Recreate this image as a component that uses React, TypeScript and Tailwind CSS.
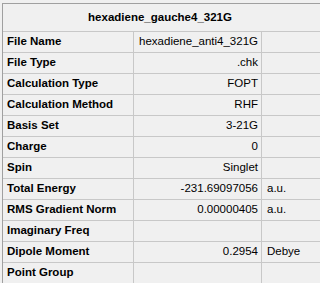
const rows: [string, string, string][] = [
  ["File Name", "hexadiene_anti4_321G", ""],
  ["File Type", ".chk", ""],
  ["Calculation Type", "FOPT", ""],
  ["Calculation Method", "RHF", ""],
  ["Basis Set", "3-21G", ""],
  ["Charge", "0", ""],
  ["Spin", "Singlet", ""],
  ["Total Energy", "-231.69097056", "a.u."],
  ["RMS Gradient Norm", "0.00000405", "a.u."],
  ["Imaginary Freq", "", ""],
  ["Dipole Moment", "0.2954", "Debye"],
  ["Point Group", "", ""],
];

export default function App() {
  return (
    <div
      className="h-[283px] w-[320px] overflow-hidden bg-[#f0f0f0] pl-[2px] pt-[3px] text-[11.5px] text-black"
      style={{ fontFamily: '"Liberation Sans", Arial, sans-serif' }}
    >
      <div className="w-[330px] border-l border-t border-[#a0a0a0]">
        <div className="flex h-[28px] items-center justify-center border-b border-[#c8c8c8] pr-[15px] font-bold">
          hexadiene_gauche4_321G
        </div>
        {rows.map(([label, value, unit]) => (
          <div
            key={label}
            className="grid h-[21px] grid-cols-[131px_128px_1fr] border-b border-[#c8c8c8]"
          >
            <div className="flex items-center border-r border-[#c8c8c8] pl-[4px] font-bold">
              {label}
            </div>
            <div className="flex items-center justify-end border-r border-[#c8c8c8] pr-[3px]">
              {value}
            </div>
            <div className="flex items-center pl-[5px]">{unit}</div>
          </div>
        ))}
      </div>
    </div>
  );
}
